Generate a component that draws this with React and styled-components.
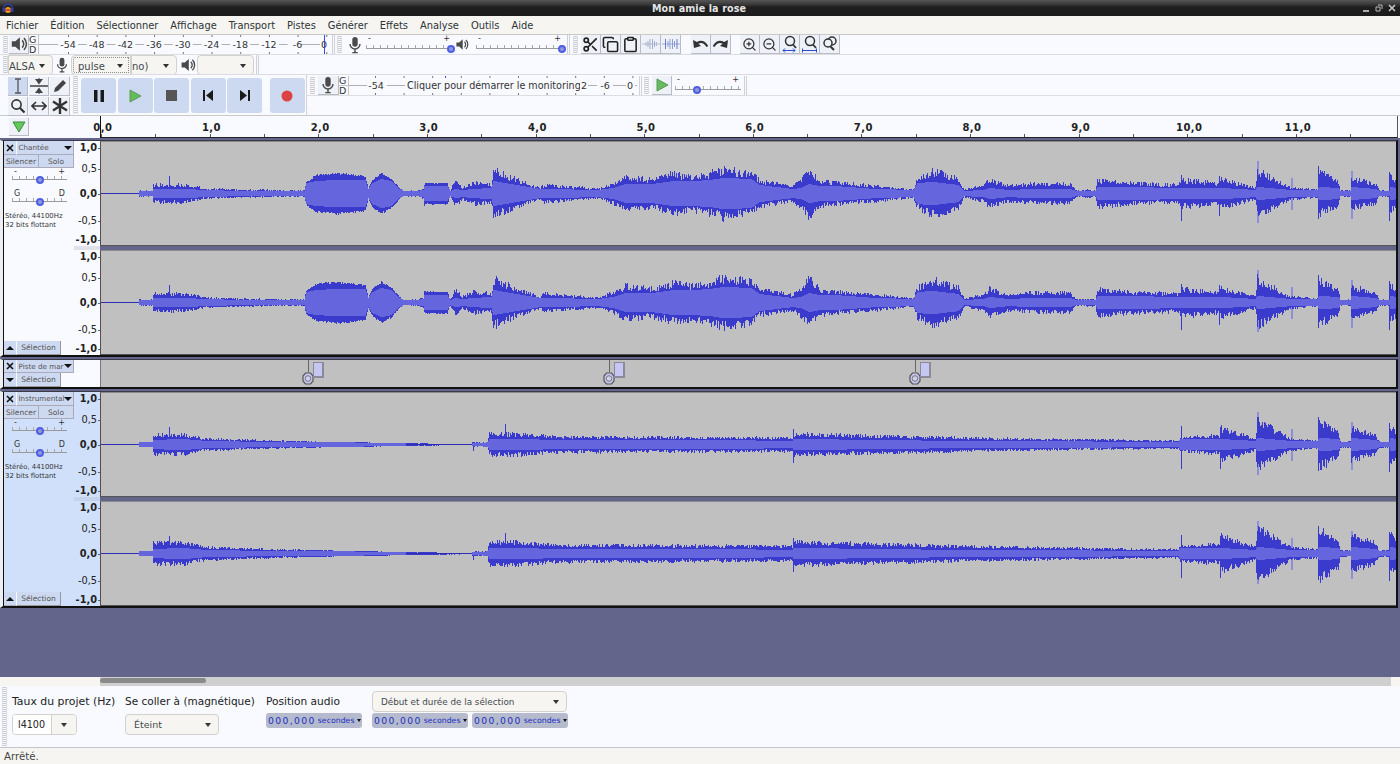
import React, { useMemo } from "react";
import styled, { createGlobalStyle } from "styled-components";
import { Scissors, Copy, Clipboard, ZoomIn, ZoomOut } from "lucide-react";

const GlobalStyle = createGlobalStyle`
  html, body { margin: 0; padding: 0; background: #f8faff; }
  * { box-sizing: border-box; }
`;

const Page = styled.div`
  width: 1400px;
  height: 764px;
  display: flex;
  flex-direction: column;
  overflow: hidden;
  font-family: "DejaVu Sans", sans-serif;
  color: #2e3436;
  background: #f8faff;
`;

const TitleBar = styled.div`
  height: 16px;
  flex: none;
  display: grid;
  grid-template-columns: 1fr auto 1fr;
  align-items: center;
  padding: 0 4px 0 2px;
  background: linear-gradient(#565656 0, #3c3c3c 25%, #1f1f1f 45%, #1c1c1c 100%);
`;

const TitleText = styled.div`
  text-align: center;
  color: #e4e4e4;
  font-size: 9.6px;
  font-weight: bold;
  letter-spacing: 0.1px;
`;

const WindowButtons = styled.div`
  display: flex;
  gap: 5px;
  align-items: center;
  justify-content: flex-end;
`;

const MenuBar = styled.div`
  height: 19px;
  flex: none;
  display: flex;
  align-items: center;
  padding-left: 6px;
  gap: 12px;
  font-size: 9.9px;
  background: #f6f5f2;
  border-bottom: 1px solid #c9c9c9;
`;

const ToolRow = styled.div`
  height: 20px;
  flex: none;
  display: flex;
  align-items: center;
  border-bottom: 1px solid #dcdde2;
  overflow: hidden;
  position: relative;
`;

const Grip = styled.div`
  flex: none;
  width: 5px;
  height: 17px;
  margin-left: ${({ $left }) => $left ?? 0}px;
  background: repeating-linear-gradient(#c9cad0 0 1px, transparent 1px 2px);
  border-left: 1px solid #dddde2;
  border-right: 1px solid #dddde2;
`;

const Sep = styled.div`
  flex: none;
  width: 3px;
  height: 20px;
  margin-left: ${({ $left }) => $left ?? 0}px;
  border-left: 1px solid #d0d1d6;
  border-right: 1px solid #d0d1d6;
`;

const IconBtn = styled.div`
  flex: none;
  width: ${({ $w }) => $w ?? 20}px;
  height: 19px;
  margin-left: ${({ $left }) => $left ?? 0}px;
  display: flex;
  align-items: center;
  justify-content: center;
  background: ${({ $active }) => ($active ? "#cdd9f0" : "#eef1f8")};
  border-right: 1px solid #b9bcc6;
  border-bottom: 1px solid #b9bcc6;
`;

const PlainIcon = styled.div`
  flex: none;
  width: ${({ $w }) => $w}px;
  margin-left: ${({ $left }) => $left ?? 0}px;
  display: flex;
  align-items: center;
  justify-content: center;
`;

const Combo = styled.div`
  flex: none;
  height: 20px;
  width: ${({ $w }) => $w}px;
  margin-left: ${({ $left }) => $left ?? 0}px;
  display: flex;
  align-items: center;
  justify-content: space-between;
  padding: 3px 7px 0 ${({ $pad }) => $pad ?? 6}px;
  font-size: 10px;
  color: #454a4d;
  background: #f6f5f2;
  border: 1px solid #d3d1cc;
  border-radius: ${({ $radius }) => $radius ?? "4px"};
  white-space: nowrap;
  overflow: hidden;
`;

const FocusCombo = styled(Combo)`
  outline: 1px dotted #8d8d8d;
  outline-offset: -3px;
  border-right: 1px solid #d3d1cc;
`;

const Caret = styled.span`
  flex: none;
  width: 0;
  height: 0;
  border-left: 3.5px solid transparent;
  border-right: 3.5px solid transparent;
  border-top: 4px solid #333;
`;

const SliderBox = styled.div`
  position: relative;
  flex: none;
  width: ${({ $w }) => $w}px;
  height: ${({ $h }) => $h ?? 19}px;
  margin-left: ${({ $left }) => $left ?? 0}px;
`;

const SliderSigns = styled.div`
  display: flex;
  justify-content: space-between;
  font-size: 8px;
  line-height: 8px;
  padding: 0 2px;
  color: #333;
`;

const SliderTrack = styled.div`
  position: absolute;
  left: 0;
  right: 0;
  bottom: 5px;
  height: 4px;
  border-bottom: 1px solid #9a9a9a;
  background: repeating-linear-gradient(90deg, #a8a8a8 0 1px, transparent 1px 7px);
`;

const SliderThumb = styled.div`
  position: absolute;
  bottom: 1px;
  width: 8px;
  height: 8px;
  margin-left: -4px;
  border-radius: 50%;
  background: #8f9ad8;
  border: 2px solid #4f5ee6;
`;

const Slider = ({ w, at, left, signs = ["-", "+"], h }) => (
  <SliderBox $w={w} $left={left} $h={h}>
    <SliderSigns>
      <span>{signs[0]}</span>
      <span>{signs[1]}</span>
    </SliderSigns>
    <SliderTrack />
    <SliderThumb style={{ left: `${at * 100}%` }} />
  </SliderBox>
);

const LowerTools = styled.div`
  height: 41px;
  flex: none;
  display: flex;
  border-bottom: 1px solid #c9c9c9;
`;

const ToolGrid = styled.div`
  flex: none;
  margin-left: 8px;
  width: 62px;
  display: grid;
  grid-template-columns: repeat(3, 20px);
  grid-auto-rows: 20px;
  gap: 0 1px;
  align-content: start;
  padding-top: 2px;
`;

const ToolBtn = styled(IconBtn)`
  height: 19px;
  width: 20px;
`;

const TransportGrip = styled(Grip)`
  height: 38px;
  margin: 1px 0 0 3px;
`;

const Transport = styled.div`
  flex: none;
  width: 229px;
  display: flex;
  gap: 1.5px;
  padding: 3px 0 0 3px;
  border-right: 1px solid #d4d5da;
`;

const TransportBtn = styled.div`
  width: 35px;
  height: 35px;
  margin-left: ${({ $left }) => $left ?? 0}px;
  border-radius: 3px;
  background: #cdd9f0;
  display: flex;
  align-items: center;
  justify-content: center;
`;

const LowerRight = styled.div`
  flex: 1;
  display: flex;
  flex-direction: column;
  padding-top: 1px;
`;

const RulerRow = styled.div`
  height: 22px;
  flex: none;
  display: flex;
  background: #f8faff;
  position: relative;
`;

const TimelineBtn = styled.div`
  flex: none;
  width: 20px;
  height: 18px;
  margin: 2px 0 0 9px;
  background: #eef1f8;
  border-right: 1px solid #b9bcc6;
  border-bottom: 1px solid #b9bcc6;
  display: flex;
  align-items: center;
  justify-content: center;
`;

const TimeScale = styled.div`
  margin-left: 71px;
  width: 1298px;
  display: flex;
  position: relative;
  border-left: 1px solid #111;
  border-right: 1px solid #555;
  border-bottom: 1px solid #222;
  background-image:
    repeating-linear-gradient(90deg, #555 0 1px, transparent 1px 54.32px);
  background-size: 100% 3px;
  background-repeat: no-repeat;
  background-position: bottom;
`;

const TimeCell = styled.div`
  flex: none;
  width: 108.65px;
  text-align: center;
  margin-left: ${({ $first }) => ($first ? "-52.5px" : "0")};
  padding-top: 6px;
  font-size: 10px;
  font-weight: bold;
  color: #222;
  letter-spacing: 0.4px;
`;

const TrackArea = styled.div`
  flex: none;
  height: 539px;
  padding-top: 2px;
  background: #63668a;
  display: flex;
  flex-direction: column;
  gap: 2px;
`;

const Track = styled.div`
  display: flex;
  width: 1398px;
  border-left: 3px solid #eceef4;
  border-top: 1px solid #3a3a48;
  border-bottom: 2px solid #111;
  border-right: 2px solid #111;
`;

const Panel = styled.div`
  flex: none;
  width: 71px;
  position: relative;
  display: flex;
  flex-direction: column;
  border-left: 1px solid #111;
  background: ${({ $sel }) => ($sel ? "#d0e0fb" : "#f8faff")};
`;

const PanelHead = styled.div`
  display: flex;
  height: 14px;
`;

const CloseBtn = styled.div`
  flex: none;
  width: 13px;
  display: flex;
  align-items: center;
  justify-content: center;
  background: #cdd9f0;
  border-right: 1px solid #f8faff;
  border-bottom: 1px solid #aab;
`;

const TitleBtn = styled.div`
  flex: 1;
  min-width: 0;
  display: flex;
  align-items: center;
  padding: 0 0 0 1.5px;
  background: #cdd9f0;
  border-right: 1px solid #aab;
  border-bottom: 1px solid #aab;
  font-size: 7.2px;
  color: #555;
  white-space: nowrap;
`;

const TitleName = styled.span`
  flex: 1;
  min-width: 0;
`;

const BigCaret = styled.span`
  flex: none;
  width: 0;
  height: 0;
  margin-right: 1px;
  border-left: 4px solid transparent;
  border-right: 4px solid transparent;
  border-${({ $up }) => ($up ? "bottom" : "top")}: 4px solid #111;
`;

const MuteRow = styled.div`
  display: flex;
  height: 13px;
`;

const MuteBtn = styled.div`
  flex: ${({ $grow }) => $grow};
  display: flex;
  align-items: center;
  justify-content: center;
  font-size: 7.5px;
  color: #555;
  background: #cdd9f0;
  border-right: 1px solid #aab;
  border-bottom: 1px solid #aab;
`;

const PanelSlider = styled.div`
  padding: ${({ $top }) => $top}px 0 0 8px;
`;

const PanelInfo = styled.div`
  padding: 4.5px 0 0 1px;
  font-size: 6.9px;
  line-height: 9px;
  color: #333;
  white-space: nowrap;
`;

const PanelFoot = styled.div`
  margin-top: auto;
  display: flex;
  height: 14px;
`;

const CollapseBtn = styled(CloseBtn)`
  background: #cdd9f0;
`;

const SelectBtn = styled.div`
  width: 44px;
  display: flex;
  align-items: center;
  justify-content: center;
  font-size: 7.5px;
  color: #555;
  background: #cdd9f0;
  border-right: 1px solid #999;
  border-bottom: 1px solid #999;
`;

const Channels = styled.div`
  flex: none;
  width: 1322px;
  display: flex;
  flex-direction: column;
  gap: 4px;
  background: linear-gradient(90deg, ${({ $sel }) => ($sel ? "#c4d2ea" : "#dfe2ea")} 26px, #63668a 26px);
`;

const Channel = styled.div`
  display: flex;
  height: 105px;
`;

const AmpRuler = styled.div`
  flex: none;
  width: 26px;
  display: flex;
  flex-direction: column;
  align-items: flex-end;
  padding-top: 1px;
  background: ${({ $sel }) => ($sel ? "#d0e0fb" : "#f8faff")};
`;

const AmpLabel = styled.div`
  height: 12px;
  margin-top: ${({ $top }) => $top}px;
  padding-right: 3px;
  line-height: 12px;
  font-size: 9.8px;
  font-weight: ${({ $bold }) => ($bold ? "bold" : "normal")};
  color: #222;
  position: relative;
  &::after {
    content: "";
    position: absolute;
    right: 0;
    top: 6px;
    width: 2px;
    height: 1px;
    background: #666;
  }
`;

const WaveBox = styled.div`
  flex: none;
  width: 1296px;
  height: 105px;
  background: #c0c0c0;
  border-left: 1px solid #5a4a4a;
  border-top: 1px solid #8a8a8a;
  border-bottom: 1px solid #555;
  overflow: hidden;
`;

const MarkerPanelRow = styled(PanelHead)`
  height: 13px;
`;

const MarkerGutter = styled.div`
  flex: none;
  width: 26px;
  background: #f8faff;
`;

const MarkerLane = styled.div`
  flex: none;
  position: relative;
  width: 1296px;
  height: 27px;
  background: #c0c0c0;
  border-left: 1px solid #777;
`;

const MarkerStem = styled.div`
  position: absolute;
  top: 0;
  width: 1px;
  height: 12px;
  background: #666;
`;

const MarkerKnob = styled.svg`
  position: absolute;
  top: 12px;
  margin-left: -6px;
`;

const MarkerLabel = styled.div`
  position: absolute;
  top: 2px;
  width: 11px;
  height: 16px;
  margin-left: 5px;
  background: #c6c6f2;
  border: 1px solid #8a8a9a;
  border-width: 1px 2px 2px 1px;
`;

const ScrollRow = styled.div`
  flex: none;
  height: 9px;
  display: flex;
`;

const ScrollStart = styled.div`
  flex: none;
  width: 100px;
  background: #f6f5f2;
`;

const ScrollTrack = styled.div`
  flex: 1;
  background: #cfcfcf;
  padding: 1px 0;
`;

const ScrollThumb = styled.div`
  width: 106px;
  height: 5px;
  border-radius: 3px;
  background: #8a8a8a;
`;

const ScrollEnd = styled.div`
  flex: none;
  width: 9px;
  background: #f6f5f2;
`;

const SelectionBar = styled.div`
  flex: none;
  height: 62px;
  display: flex;
  background: #f8faff;
  border-bottom: 1px solid #c4c4cc;
`;

const SelectionGrip = styled(Grip)`
  height: 59px;
  margin: 1px 0 0 2px;
`;

const SelColumn = styled.div`
  flex: none;
  width: ${({ $w }) => $w}px;
  display: flex;
  flex-direction: column;
  padding-left: ${({ $pad }) => $pad}px;
`;

const SelLabel = styled.div`
  height: 27px;
  padding-top: 9px;
  font-size: ${({ $size }) => $size ?? 10.9}px;
  white-space: nowrap;
  color: #222;
`;

const RateField = styled.div`
  width: 65px;
  height: 21px;
  margin-top: 1px;
  display: flex;
  border: 1px solid #d3d1cc;
  border-radius: 4px;
  overflow: hidden;
  font-size: 9.6px;
  color: #222;
`;

const RateValue = styled.div`
  width: 39px;
  background: #fff;
  border-right: 1px solid #d3d1cc;
  display: flex;
  align-items: center;
  padding-left: 5px;
`;

const RateArrow = styled.div`
  flex: 1;
  background: #f6f5f2;
  display: flex;
  align-items: center;
  justify-content: center;
`;

const SelCombo = styled(Combo)`
  height: 21px;
  font-size: 9.5px;
  margin-top: 1px;
  padding-top: 0;
`;

const RangeCombo = styled(Combo)`
  height: 21px;
  font-size: 8.8px;
  margin: 5px 0 1px;
  padding-top: 0;
`;

const TimeField = styled.div`
  flex: none;
  width: 96px;
  height: 15px;
  display: flex;
  align-items: center;
  padding-left: 2px;
  border-radius: 3px;
  background: #b6bacd;
  color: #2030c0;
  white-space: nowrap;
  overflow: hidden;
`;

const TimeDigits = styled.span`
  font-size: 9.2px;
  letter-spacing: 1.4px;
`;

const TimeUnit = styled.span`
  font-size: 7.8px;
  margin-left: 2px;
  flex: 1;
`;

const TimeCaret = styled.span`
  flex: none;
  margin-right: 1px;
  width: 0;
  height: 0;
  border-left: 2.5px solid transparent;
  border-right: 2.5px solid transparent;
  border-top: 3px solid #111;
`;

const TimeRow = styled.div`
  display: flex;
  gap: 4px;
`;

const StatusBar = styled.div`
  flex: 1;
  display: flex;
  align-items: center;
  padding-left: 4px;
  background: #f6f5f2;
  font-size: 10.2px;
  color: #444;
`;

// peak / rms envelopes: [x on screen, peak px, rms px]
const VOCAL_ENV = [
  [100, 0.5, 0.4], [137, 0.5, 0.4], [138, 3, 2], [151, 3, 2], [152, 9, 4], [183, 9, 4], [204, 5, 3], [237, 4, 2],
  [303, 3, 2], [305, 12, 10], [315, 19, 12], [336, 21, 13], [364, 18, 13], [367, 5, 4], [371, 14, 10], [380, 21, 14],
  [390, 15, 12], [398, 6, 4], [402, 2, 2], [409, 3, 2], [415, 3, 2], [422, 5, 3], [423, 11, 7], [446, 11, 7],
  [449, 3, 2], [454, 13, 4], [461, 6, 3], [473, 11, 4], [490, 9, 5], [492, 24, 12], [515, 14, 8], [539, 6, 4],
  [543, 9, 4], [597, 5, 3], [612, 10, 5], [624, 17, 9], [651, 14, 9], [672, 20, 12], [693, 17, 12], [709, 21, 13],
  [722, 25, 15], [750, 21, 14], [758, 13, 8], [791, 8, 4], [800, 14, 5], [808, 25, 9], [818, 13, 7], [833, 11, 7],
  [874, 8, 4], [912, 4, 3], [916, 15, 10], [932, 23, 11], [957, 15, 8], [963, 4, 2], [982, 8, 3], [988, 14, 5],
  [1007, 8, 3], [1032, 10, 4], [1069, 10, 4], [1075, 3, 2], [1088, 4, 2], [1094, 3, 2], [1096, 14, 6], [1123, 11, 6],
  [1177, 9, 5], [1181, 14, 5], [1218, 10, 5], [1220, 15, 5], [1254, 6, 3], [1256, 24, 6], [1289, 6, 3], [1316, 4, 3],
  [1318, 22, 6], [1337, 13, 5], [1339, 3, 2], [1349, 3, 2], [1350, 16, 6], [1374, 10, 4], [1378, 3, 2], [1388, 3, 2],
  [1389, 18, 6], [1396, 13, 5],
];

const INSTR_ENV = [
  [100, 0.5, 0.4], [137, 0.5, 0.4], [138, 2, 2], [151, 2, 2], [152, 10, 4], [183, 10, 5], [204, 6, 3], [266, 4, 2],
  [349, 2.5, 1.5], [432, 1, 0.6], [470, 0.7, 0.5], [471, 2, 1], [486, 2, 1.5], [488, 11, 5], [515, 11, 5], [556, 8, 4],
  [750, 7, 3.5], [791, 7, 3], [792, 11, 5], [874, 9, 4], [957, 7, 3], [1082, 5, 2.5], [1177, 4, 2], [1179, 7, 5],
  [1210, 9, 5], [1218, 8, 5], [1219, 17, 5], [1254, 6, 3], [1256, 25, 6], [1289, 6, 3], [1316, 4, 3], [1318, 24, 6],
  [1337, 13, 5], [1339, 3, 2], [1349, 3, 2], [1350, 17, 6], [1374, 10, 4], [1378, 3, 2], [1388, 3, 2], [1389, 18, 6],
  [1396, 13, 5],
];

// [x, up, down, light]
const VOCAL_SPIKES = [
  [168, 18, 9], [1180, 19, 27], [1218, 18, 22], [1256, 33, 29, 1], [1290, 16, 16, 1], [1317, 28, 25],
  [1350, 23, 25, 1], [1388, 22, 27],
];
const INSTR_SPIKES = [
  [168, 18, 9], [472, 2, 6], [504, 21, 9], [792, 16, 18], [1180, 19, 24], [1219, 18, 24], [1256, 33, 30, 1],
  [1290, 16, 16, 1], [1317, 28, 26], [1350, 23, 25, 1], [1388, 22, 27],
];

const smoothZone = (x) => (x > 304 && x < 400) || (x > 423 && x < 447);

const buildWave = (env, spikes, seed, gain = 1) => {
  let s = seed;
  const rand = () => {
    s = (s * 16807) % 2147483647;
    return s / 2147483647;
  };
  const mid = 51.5;
  let peak = "";
  let rms = "";
  let seg = 0;
  for (let x = 100; x < 1396; x++) {
    while (seg < env.length - 2 && env[seg + 1][0] <= x) seg++;
    const [x0, p0, r0] = env[seg];
    const [x1, p1, r1] = env[seg + 1];
    const t = Math.min(1, (x - x0) / (x1 - x0));
    const p = (p0 + (p1 - p0) * t) * gain;
    const r = r0 + (r1 - r0) * t;
    const calm = smoothZone(x);
    const noise = calm ? 0.1 : 0.36;
    const boost = calm ? 1 : 1.1;
    const up = p * boost * (1 - noise + noise * rand() * 1.15);
    const down = p * boost * (1 - noise + noise * rand() * 1.15);
    const px = x - 100 + 0.5;
    peak += `M${px} ${(mid - up).toFixed(1)}V${(mid + down).toFixed(1)}`;
    // near silence shows only the dark centre line
    if (r > 0.9) rms += `M${px} ${(mid - r - 0.6).toFixed(1)}V${(mid + r + 0.6).toFixed(1)}`;
  }
  let dark = "";
  let light = "";
  spikes.forEach(([x, up, down, isLight]) => {
    const d = `M${x - 100 + 0.5} ${mid - up}V${mid + down}`;
    if (isLight) light += d;
    else dark += d;
  });
  return { peak, rms, dark, light, centre: `M0 ${mid}H1296` };
};

const Wave = ({ env, spikes, seed, gain }) => {
  const w = useMemo(() => buildWave(env, spikes, seed, gain), [env, spikes, seed, gain]);
  return (
    <svg width="1296" height="103" viewBox="0 0 1296 103" shapeRendering="crispEdges">
      <path d={w.light} stroke="#8f8fd8" strokeWidth="2" fill="none" />
      <path d={w.peak} stroke="#3a3acc" strokeWidth="1" fill="none" />
      <path d={w.dark} stroke="#3a3acc" strokeWidth="1" fill="none" />
      <path d={w.centre} stroke="#2e2eb4" strokeWidth="1" fill="none" />
      <path d={w.rms} stroke="#6565dd" strokeWidth="1" fill="none" />
    </svg>
  );
};

const AmpScale = ({ sel }) => (
  <AmpRuler $sel={sel}>
    <AmpLabel $bold $top={0}>1,0</AmpLabel>
    <AmpLabel $top={9}>0,5</AmpLabel>
    <AmpLabel $bold $top={13}>0,0</AmpLabel>
    <AmpLabel $top={15}>-0,5</AmpLabel>
    <AmpLabel $bold $top={7}>-1,0</AmpLabel>
  </AmpRuler>
);

const XMark = () => (
  <svg width="8" height="8" viewBox="0 0 8 8">
    <path d="M1 1l6 6M7 1l-6 6" stroke="#111" strokeWidth="1.6" />
  </svg>
);

const StereoTrack = ({ name, sel, env, spikes, seeds, gains }) => (
  <Track>
    <Panel $sel={sel}>
      <PanelHead>
        <CloseBtn><XMark /></CloseBtn>
        <TitleBtn>
          <TitleName>{name}</TitleName>
          <BigCaret />
        </TitleBtn>
      </PanelHead>
      <MuteRow>
        <MuteBtn $grow={35}>Silencer</MuteBtn>
        <MuteBtn $grow={35}>Solo</MuteBtn>
      </MuteRow>
      <PanelSlider $top={0}><Slider w={55} at={0.5} h={17} /></PanelSlider>
      <PanelSlider $top={5}><Slider w={55} at={0.5} signs={["G", "D"]} h={17} /></PanelSlider>
      <PanelInfo>
        Stéréo, 44100Hz
        <br />
        32 bits flottant
      </PanelInfo>
      <PanelFoot>
        <CollapseBtn><BigCaret $up /></CollapseBtn>
        <SelectBtn>Sélection</SelectBtn>
      </PanelFoot>
    </Panel>
    <Channels $sel={sel}>
      <Channel>
        <AmpScale sel={sel} />
        <WaveBox><Wave env={env} spikes={spikes} seed={seeds[0]} gain={gains[0]} /></WaveBox>
      </Channel>
      <Channel>
        <AmpScale sel={sel} />
        <WaveBox><Wave env={env} spikes={spikes} seed={seeds[1]} gain={gains[1]} /></WaveBox>
      </Channel>
    </Channels>
  </Track>
);

const MARKERS = [207, 508, 814];

const MarkerTrack = () => (
  <Track>
    <Panel>
      <MarkerPanelRow>
        <CloseBtn><XMark /></CloseBtn>
        <TitleBtn>
          <TitleName>Piste de mar</TitleName>
          <BigCaret />
        </TitleBtn>
      </MarkerPanelRow>
      <PanelFoot>
        <CollapseBtn><BigCaret /></CollapseBtn>
        <SelectBtn>Sélection</SelectBtn>
      </PanelFoot>
    </Panel>
    <MarkerGutter />
    <MarkerLane>
      {MARKERS.map((x) => (
        <React.Fragment key={x}>
          <MarkerStem style={{ left: x }} />
          <MarkerKnob style={{ left: x }} width="12" height="13" viewBox="0 0 12 13">
            <path d="M3.5 1h5L11 4v5l-2.5 3h-5L1 9V4z" fill="#c6c6f2" stroke="#555" strokeWidth="1.2" />
            <circle cx="6" cy="6.5" r="2.8" fill="#d0d0ee" stroke="#777" />
          </MarkerKnob>
          <MarkerLabel style={{ left: x }} />
        </React.Fragment>
      ))}
    </MarkerLane>
  </Track>
);

const SpeakerIcon = ({ size = 18 }) => (
  <svg width={size} height={size} viewBox="0 0 20 20">
    <path d="M2 7h4l5-4.5v15L6 13H2z" fill="#4a4a4a" />
    <path d="M13.5 6a5.5 5.5 0 0 1 0 8M15.5 3.5a9 9 0 0 1 0 13" stroke="#4a4a4a" strokeWidth="1.7" fill="none" />
  </svg>
);

const MicIcon = ({ size = 18 }) => (
  <svg width={size} height={size} viewBox="0 0 20 20">
    <rect x="7" y="1" width="6" height="11" rx="3" fill="#4a4a4a" />
    <path d="M4.5 9a5.5 5.5 0 0 0 11 0M10 15v3M7 18.5h6" stroke="#4a4a4a" strokeWidth="1.6" fill="none" />
  </svg>
);

const MiniWave = ({ color, active }) => (
  <svg width="18" height="16" viewBox="0 0 18 16">
    <path d="M0 8h18" stroke={active ? "#8a9ac4" : "#aab2c6"} strokeWidth="0.8" />
    <path d="M6 5v6M8 3v10M10.5 3v10M12.5 5v6" stroke={color} strokeWidth="0.9" />
    <path d={active ? "M3.5 3v10M15 3v10" : "M4 6v4M14.5 6v4"} stroke={active ? "#5a70c0" : "#aab2c6"} strokeWidth="0.9" />
  </svg>
);

const UndoIcon = ({ flip }) => (
  <svg width="17" height="13" viewBox="0 0 17 13" style={flip ? { transform: "scaleX(-1)" } : undefined}>
    <path d="M1 2l1 8 7-2-2.5-2.2C9 4.3 12 4.8 14.5 9l1.8-1C13.5 2.5 8.5 1.4 5 4z" fill="#333" />
  </svg>
);

const FitZoom = ({ kind }) => (
  <svg width="18" height="18" viewBox="0 0 18 18">
    <circle cx="9" cy="6" r="4.5" fill="none" stroke="#333" strokeWidth="1.5" />
    <path d="M12 9.5l3 3.5" stroke="#333" strokeWidth="1.8" />
    {kind === "sel" ? (
      <path d="M2 15.5h12M4 13.5l-2 2 2 2M12 13.5l2 2-2 2" stroke="#2a4ad0" strokeWidth="1" fill="none" />
    ) : (
      <path d="M1.5 15.5h14M1.5 13.5v4M15.5 13.5v4" stroke="#2a4ad0" strokeWidth="1" fill="none" />
    )}
  </svg>
);

const ToggleZoom = () => (
  <svg width="18" height="18" viewBox="0 0 18 18">
    <circle cx="11" cy="6" r="4" fill="none" stroke="#333" strokeWidth="1.5" />
    <circle cx="7" cy="8" r="4" fill="#eef1f8" stroke="#333" strokeWidth="1.5" />
    <path d="M9.5 11.5l3.5 3.5" stroke="#333" strokeWidth="2" />
  </svg>
);

const IBeam = () => (
  <svg width="14" height="16" viewBox="0 0 14 16">
    <path d="M4 1h6M7 1v14M4 15h6" stroke="#555" strokeWidth="1.3" fill="none" />
  </svg>
);

const EnvelopeTool = () => (
  <svg width="18" height="16" viewBox="0 0 18 16">
    <path d="M0 8h18" stroke="#333" strokeWidth="1.4" />
    <path d="M5 1h8L9 6.5zM5 15h8L9 9.5z" fill="#444" />
    <path d="M9 0v3M9 13v3" stroke="#444" />
  </svg>
);

const PencilTool = () => (
  <svg width="16" height="16" viewBox="0 0 16 16">
    <path d="M2 14l1-4 8-8 3 3-8 8z" fill="#444" />
  </svg>
);

const ZoomTool = () => (
  <svg width="16" height="16" viewBox="0 0 16 16">
    <circle cx="6.5" cy="6.5" r="4.6" fill="none" stroke="#333" strokeWidth="1.6" />
    <path d="M10 10l4.5 4.5" stroke="#333" strokeWidth="2.2" />
  </svg>
);

const ShiftTool = () => (
  <svg width="16" height="12" viewBox="0 0 16 12">
    <path d="M1 6h14M5 2L1 6l4 4M11 2l4 4-4 4" stroke="#333" strokeWidth="1.6" fill="none" />
  </svg>
);

const MultiTool = () => (
  <svg width="16" height="16" viewBox="0 0 16 16">
    <path d="M8 0v16M1 3.5l14 9M15 3.5l-14 9" stroke="#333" strokeWidth="2.4" />
  </svg>
);

const TOP_METER = ["-54", "-48", "-42", "-36", "-30", "-24", "-18", "-12", "-6"];

const meterFont = { fontFamily: "DejaVu Sans", fontSize: 9.5, fill: "#333" };

const MeterTicks = ({ width, start, step, count }) => (
  <>
    <path d={`M10 9.5H${width}`} stroke="#b0b0b0" />
    {Array.from({ length: count }, (_, i) => (
      <path
        key={i}
        d={`M${start + i * step + 0.5} 0v2M${start + i * step + 0.5} 17v2`}
        stroke="#777"
      />
    ))}
    <path d="M0 9.5H9M9.5 0V19" stroke="#c4c4c4" fill="none" />
  </>
);

const GD = () => (
  <>
    <text x="0" y="8" {...meterFont}>G</text>
    <text x="0" y="18" {...meterFont}>D</text>
  </>
);

const PlayMeter = () => (
  <svg width="301" height="19" viewBox="0 0 301 19" style={{ flex: "none", display: "block" }}>
    <MeterTicks width={298} start={39} step={28.7} count={10} />
    <GD />
    {TOP_METER.map((label, i) => (
      <g key={label}>
        <rect x={29 + i * 28.7} y={5} width={label.length > 2 ? 20 : 13} height={10} fill="#f8faff" />
        <text x={39 + i * 28.7} y={13} textAnchor="middle" {...meterFont}>{label}</text>
      </g>
    ))}
    <rect x="291" y="5" width="8" height="10" fill="#f8faff" />
    <text x="295" y="13" textAnchor="middle" {...meterFont}>0</text>
    <path d="M295.5 0V19" stroke="#3a4ae0" />
  </svg>
);

const RecordMeter = () => (
  <svg width="300" height="19" viewBox="0 0 300 19" style={{ flex: "none", display: "block" }}>
    <MeterTicks width={298} start={36} step={28.6} count={10} />
    <GD />
    <path d="M106.5 0v2" stroke="#3a4ae0" />
    <rect x="28" y="5" width="20" height="10" fill="#f8faff" />
    <text x="37" y="13" textAnchor="middle" {...meterFont}>-54</text>
    <rect x="66" y="3" width="175" height="13" fill="#f8faff" />
    <text x="68" y="13" {...meterFont} fontSize="9.6">Cliquer pour démarrer le monitoring</text>
    <rect x="241" y="5" width="8" height="10" fill="#f8faff" />
    <text x="245" y="13" textAnchor="middle" {...meterFont}>2</text>
    <rect x="258" y="5" width="16" height="10" fill="#f8faff" />
    <text x="266" y="13" textAnchor="middle" {...meterFont}>-6</text>
    <rect x="287" y="5" width="9" height="10" fill="#f8faff" />
    <text x="291" y="13" textAnchor="middle" {...meterFont}>0</text>
  </svg>
);

const MENU = ["Fichier", "Édition", "Sélectionner", "Affichage", "Transport", "Pistes", "Générer", "Effets", "Analyse", "Outils", "Aide"];

const SECONDS = ["0,0", "1,0", "2,0", "3,0", "4,0", "5,0", "6,0", "7,0", "8,0", "9,0", "10,0", "11,0"];

const TimeBox = () => (
  <TimeField>
    <TimeDigits>000,000</TimeDigits>
    <TimeUnit>secondes</TimeUnit>
    <TimeCaret />
  </TimeField>
);

const App = () => (
  <Page>
    <GlobalStyle />
    <TitleBar>
      <svg width="12" height="12" viewBox="0 0 12 12">
        <path d="M1.5 7a4.5 5 0 0 1 9 0" stroke="#2a3fb0" strokeWidth="1.4" fill="none" />
        <rect x="0.5" y="6" width="2.4" height="4" fill="#2a3fb0" />
        <rect x="9" y="6" width="2.4" height="4" fill="#2a3fb0" />
        <circle cx="6" cy="8" r="3" fill="#e0a020" />
        <path d="M3 8h6" stroke="#d83a20" strokeWidth="1.6" />
      </svg>
      <TitleText>Mon amie la rose</TitleText>
      <WindowButtons>
        <svg width="8" height="8" viewBox="0 0 8 8"><path d="M1 7h6" stroke="#ddd" strokeWidth="1.5" /></svg>
        <svg width="8" height="8" viewBox="0 0 8 8"><path d="M1 3h4v4H1zM3 1h4v4" stroke="#bbb" fill="none" /></svg>
        <svg width="8" height="8" viewBox="0 0 8 8"><path d="M1 1l6 6M7 1L1 7" stroke="#ccc" strokeWidth="1.5" /></svg>
      </WindowButtons>
    </TitleBar>

    <MenuBar>
      {MENU.map((item) => (
        <span key={item}>{item}</span>
      ))}
    </MenuBar>

    <ToolRow>
      <Grip $left={3} />
      <IconBtn $left={1}><SpeakerIcon /></IconBtn>
      <PlayMeter />
      <Sep $left={2} />
      <Grip $left={2} />
      <PlainIcon $w={19} $left={3}><MicIcon /></PlainIcon>
      <Slider w={86} at={0.99} left={2} />
      <PlainIcon $w={14} $left={3}><SpeakerIcon size={15} /></PlainIcon>
      <Slider w={87} at={0.99} left={7} />
      <Sep $left={4} />
      <Grip $left={3} />
      <IconBtn $left={3}><Scissors size={17} strokeWidth={2.4} color="#222" /></IconBtn>
      <IconBtn><Copy size={17} strokeWidth={2.2} color="#222" /></IconBtn>
      <IconBtn><Clipboard size={17} strokeWidth={2.2} color="#222" /></IconBtn>
      <IconBtn><MiniWave color="#9aa6c8" /></IconBtn>
      <IconBtn><MiniWave color="#7f94d8" active /></IconBtn>
      <IconBtn $left={10}><UndoIcon /></IconBtn>
      <IconBtn><UndoIcon flip /></IconBtn>
      <IconBtn $left={9}><ZoomIn size={15} strokeWidth={2} color="#333" /></IconBtn>
      <IconBtn><ZoomOut size={15} strokeWidth={2} color="#333" /></IconBtn>
      <IconBtn><FitZoom kind="sel" /></IconBtn>
      <IconBtn><FitZoom kind="proj" /></IconBtn>
      <IconBtn><ToggleZoom /></IconBtn>
    </ToolRow>

    <ToolRow>
      <Grip $left={3} />
      <Combo $w={45} $pad={0} $radius="0 4px 4px 0">ALSA<Caret /></Combo>
      <PlainIcon $w={18}><MicIcon size={16} /></PlainIcon>
      <FocusCombo $w={60} $radius="4px 0 0 4px">pulse<Caret /></FocusCombo>
      <Combo $w={46} $pad={0} $radius="0 4px 4px 0">no)<Caret /></Combo>
      <PlainIcon $w={19} $left={1}><SpeakerIcon size={16} /></PlainIcon>
      <Combo $w={57}>&nbsp;<Caret /></Combo>
      <Sep $left={2} />
    </ToolRow>

    <LowerTools>
      <ToolGrid>
        <ToolBtn $active><IBeam /></ToolBtn>
        <ToolBtn><EnvelopeTool /></ToolBtn>
        <ToolBtn><PencilTool /></ToolBtn>
        <ToolBtn><ZoomTool /></ToolBtn>
        <ToolBtn><ShiftTool /></ToolBtn>
        <ToolBtn><MultiTool /></ToolBtn>
      </ToolGrid>
      <TransportGrip />
      <Transport>
        <TransportBtn>
          <svg width="12" height="12" viewBox="0 0 12 12"><path d="M1 0h3.5v12H1zM7.5 0H11v12H7.5z" fill="#1a1a1a" /></svg>
        </TransportBtn>
        <TransportBtn>
          <svg width="14" height="14" viewBox="0 0 14 14"><path d="M2 1l11 6-11 6z" fill="#66bb5e" stroke="#5a9a5a" /></svg>
        </TransportBtn>
        <TransportBtn>
          <svg width="11" height="11" viewBox="0 0 11 11"><rect width="11" height="11" fill="#555" /></svg>
        </TransportBtn>
        <TransportBtn>
          <svg width="12" height="11" viewBox="0 0 12 11"><path d="M1 0h2v11H1zM11 0v11L4 5.5z" fill="#1a1a1a" /></svg>
        </TransportBtn>
        <TransportBtn>
          <svg width="12" height="11" viewBox="0 0 12 11"><path d="M9 0h2v11H9zM1 0v11l7-5.5z" fill="#1a1a1a" /></svg>
        </TransportBtn>
        <TransportBtn $left={6}>
          <svg width="12" height="12" viewBox="0 0 12 12"><circle cx="6" cy="6" r="5.5" fill="#dc4242" /></svg>
        </TransportBtn>
      </Transport>
      <LowerRight>
        <ToolRow>
          <Grip $left={3} />
          <IconBtn $left={3} $w={21}><MicIcon /></IconBtn>
          <RecordMeter />
          <Sep />
          <Grip $left={2} />
          <IconBtn $left={3}>
            <svg width="14" height="14" viewBox="0 0 14 14"><path d="M2 1l11 6-11 6z" fill="#66bb5e" stroke="#5a9a5a" /></svg>
          </IconBtn>
          <Slider w={66} at={0.33} left={3} />
          <Sep $left={3} />
        </ToolRow>
      </LowerRight>
    </LowerTools>

    <RulerRow>
      <TimelineBtn>
        <svg width="14" height="12" viewBox="0 0 14 12"><path d="M1 1h12L7 11z" fill="#62c95a" stroke="#3c8a3c" /></svg>
      </TimelineBtn>
      <TimeScale>
        {SECONDS.map((s, i) => (
          <TimeCell key={s} $first={i === 0}>{s}</TimeCell>
        ))}
      </TimeScale>
    </RulerRow>

    <TrackArea>
      <StereoTrack
        name="Chantée"
        env={VOCAL_ENV}
        spikes={VOCAL_SPIKES}
        seeds={[1234, 98765]}
        gains={[1, 1.02]}
      />
      <MarkerTrack />
      <StereoTrack
        name="Instrumental"
        sel
        env={INSTR_ENV}
        spikes={INSTR_SPIKES}
        seeds={[4321, 55555]}
        gains={[1, 1.1]}
      />
    </TrackArea>

    <ScrollRow>
      <ScrollStart />
      <ScrollTrack><ScrollThumb /></ScrollTrack>
      <ScrollEnd />
    </ScrollRow>

    <SelectionBar>
      <SelectionGrip />
      <SelColumn $w={113} $pad={5}>
        <SelLabel>Taux du projet (Hz)</SelLabel>
        <RateField>
          <RateValue>l4100</RateValue>
          <RateArrow><Caret /></RateArrow>
        </RateField>
      </SelColumn>
      <SelColumn $w={141} $pad={5}>
        <SelLabel $size={10.5}>Se coller à (magnétique)</SelLabel>
        <SelCombo $w={94} $pad={8}>Éteint<Caret /></SelCombo>
      </SelColumn>
      <SelColumn $w={106} $pad={5}>
        <SelLabel $size={10.6}>Position audio</SelLabel>
        <TimeBox />
      </SelColumn>
      <SelColumn $w={206} $pad={5}>
        <RangeCombo $w={195} $pad={8}>Début et durée de la sélection<Caret /></RangeCombo>
        <TimeRow>
          <TimeBox />
          <TimeBox />
        </TimeRow>
      </SelColumn>
    </SelectionBar>

    <StatusBar>Arrêté.</StatusBar>
  </Page>
);

export default App;
